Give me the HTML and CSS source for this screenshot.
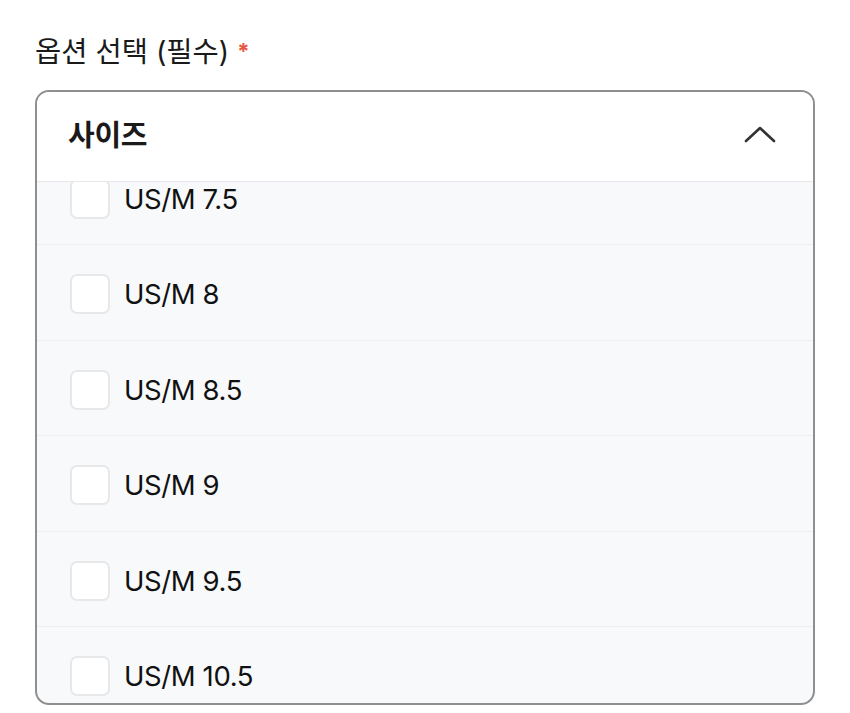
FILE: index.html
```html
<!DOCTYPE html>
<html lang="ko">
<head>
  <meta charset="UTF-8">
  <title>옵션 선택</title>
  <link rel="stylesheet" href="styles.css">
</head>
<body>
  <div class="container">
    <div class="label">옵션 선택 (필수) <span class="required">*</span></div>

    <!-- 옵션 드롭다운 -->
    <div class="dropdown">
      <div class="dropdown-header">
        <span class="dropdown-title">사이즈</span>
        <svg class="chevron" width="32" height="18" viewBox="0 0 32 18">
          <path d="M2 16 L16 3 L30 16" fill="none" stroke="#333" stroke-width="2.6" stroke-linecap="round" stroke-linejoin="round"/>
        </svg>
      </div>
      <div class="option-list">
        <div class="option-inner">
          <label class="option"><span class="check"></span><span class="option-name">US/M 7.5</span></label>
          <label class="option"><span class="check"></span><span class="option-name">US/M 8</span></label>
          <label class="option"><span class="check"></span><span class="option-name">US/M 8.5</span></label>
          <label class="option"><span class="check"></span><span class="option-name">US/M 9</span></label>
          <label class="option"><span class="check"></span><span class="option-name">US/M 9.5</span></label>
          <label class="option"><span class="check"></span><span class="option-name">US/M 10.5</span></label>
        </div>
      </div>
    </div>
  </div>
</body>
</html>
```

FILE: styles.css
```css
body {
  margin: 0;
  padding: 0;
  background: #ffffff;
  color: #111111;
  font-family: 'Inter', 'Noto Sans CJK KR', sans-serif;
}

.container {
  padding: 35px 35px 0 35px;
  width: 780px;
}

.label {
  font-size: 28.5px;
  line-height: 33px;
  font-weight: 400;
  color: #1a1a1a;
}

.required {
  color: #e8553f;
  font-size: 22px;
  font-weight: 700;
  vertical-align: 3px;
}

.dropdown {
  margin-top: 22px;
  border: 2px solid #8f8f8f;
  border-radius: 14px;
  overflow: hidden;
  background: #f8f9fb;
}

.dropdown-header {
  height: 90px;
  box-sizing: border-box;
  background: #ffffff;
  border-bottom: 1px solid #e6e7ea;
  display: flex;
  align-items: center;
  justify-content: space-between;
  padding: 0 37px 8px 31px;
}

.dropdown-title {
  font-size: 29px;
  font-weight: 700;
  letter-spacing: -0.3px;
  color: #1a1a1a;
}

.chevron {
  display: block;
  margin-top: 2px;
}

/* scrolled list */
.option-list {
  height: 521px;
  overflow: hidden;
}

.option-inner {
  margin-top: -32.5px;
}

.option {
  display: flex;
  align-items: center;
  height: 95.5px;
  box-sizing: border-box;
  border-bottom: 1px solid #eceef1;
  padding: 4px 0 0 33px;
  cursor: pointer;
}

.check {
  width: 40px;
  height: 40px;
  box-sizing: border-box;
  border: 2px solid #e7e8ea;
  border-radius: 7px;
  background: #ffffff;
  margin-right: 14px;
}

.option-name {
  font-size: 27.5px;
  font-weight: 400;
  letter-spacing: -0.4px;
  color: #111111;
}
```
